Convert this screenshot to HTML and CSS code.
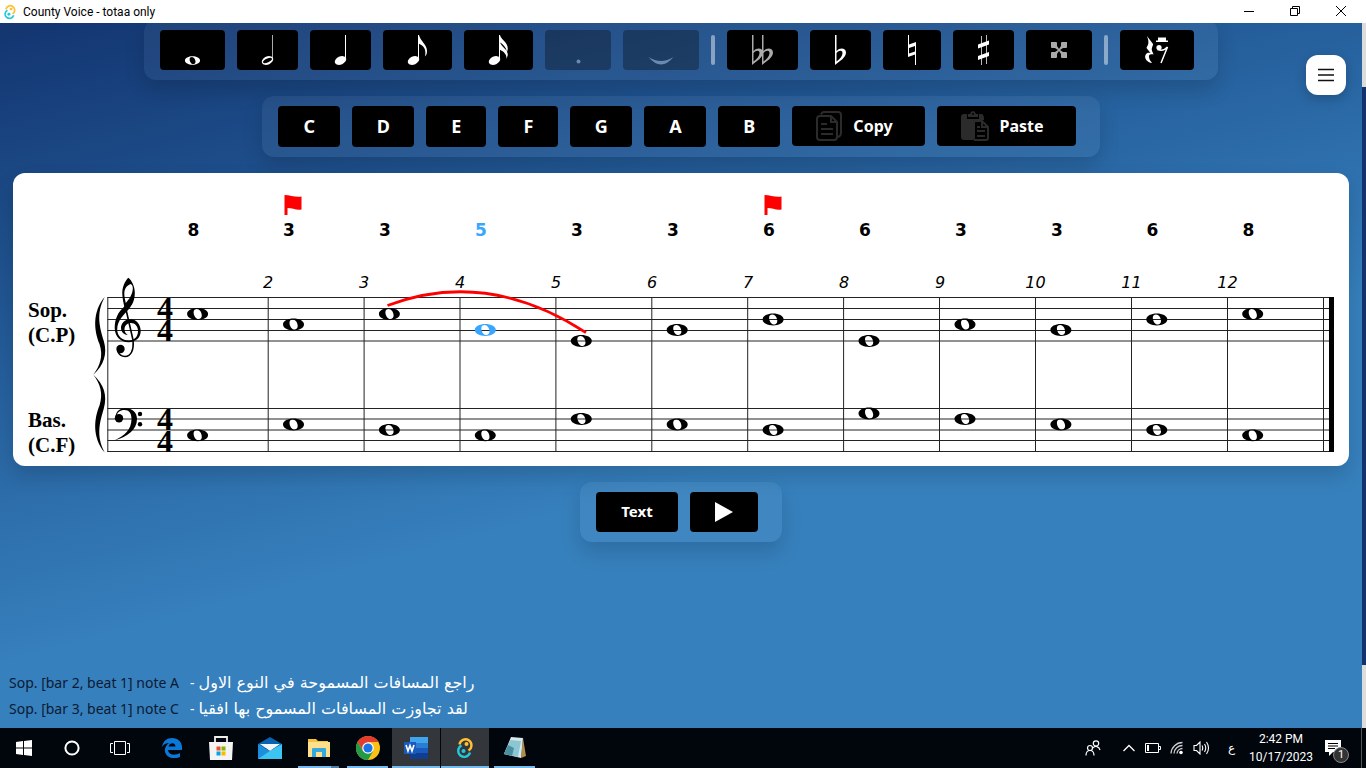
FILE: index.html
```html
<!DOCTYPE html>
<html lang="en">
<head>
<meta charset="utf-8">
<title>County Voice - totaa only</title>
<link rel="stylesheet" href="styles.css">
</head>
<body>
<svg class="defs" aria-hidden="true">
  <defs>
    <path id="whole" fill="currentColor" fill-rule="evenodd" d="M-10.500 0C-10.500-3.600-5.500-5.900 0-5.900S10.500-3.600 10.500 0 5.500 5.900 0 5.900-10.500 3.600-10.500 0ZM-4-1.800C-4-4-2.600-5-.8-5 2-5 4.200-1.800 4.200 1.600 4.200 3.800 2.800 5 1 5-1.800 5-4 1.500-4-1.800Z"/>
    <path id="flat" fill="currentColor" fill-rule="evenodd" d="M0 0H1.500V16C5 12 11 13 11 17.500 11 22.500 5 26 0 30ZM1.500 18V26.500C5 24 7.500 21 7.500 18 7.500 15 4 15 1.500 18Z"/>
    <path id="flag" fill="#f00" d="M0 0C6 .2 11 2.500 17 1.500V14.500C12 15.500 8 13 3 13V20H0Z"/>
    <path id="half-brace" d="M104.700 297C92 312 94 331 99.500 344 103.500 356 100 366 93.300 374.700 104 365 107.500 354 103.800 341 100 328 95.500 314 104.700 297Z"/>
    <g id="link-logo" fill="none" stroke-width="2.400">
      <path stroke="#ffc131" d="M5.500 7.500A6 6 0 1 1 14.500 13.500"/>
      <path stroke="#24c8db" d="M7.500 8.500A6 6 0 1 0 16 15.500"/>
      <circle cx="12.500" cy="7" r="2" fill="#ffc131"/>
      <circle cx="9.500" cy="14" r="2" fill="#24c8db"/>
    </g>
  </defs>
</svg>

<header class="titlebar">
  <svg class="titlebar-logo" viewBox="0 0 22 22" aria-hidden="true"><use href="#link-logo"/></svg>
  <span class="titlebar-text">County Voice - totaa only</span>
  <div class="window-controls">
    <button type="button" aria-label="Minimize"><svg width="12" height="12" viewBox="0 0 12 12"><path d="M1 6.500H11" stroke="#000" fill="none"/></svg></button>
    <button type="button" aria-label="Restore"><svg width="12" height="12" viewBox="0 0 12 12"><path d="M1.500 3.500h7v7h-7zM3.500 3.500v-2h7v7h-2" stroke="#000" fill="none"/></svg></button>
    <button type="button" aria-label="Close"><svg width="12" height="12" viewBox="0 0 12 12"><path d="M1 1L11 11M11 1L1 11" stroke="#000" fill="none"/></svg></button>
  </div>
</header>

<div class="app">
  <main class="workspace">
    <div class="panel panel-notes">
      <button type="button" class="tool" aria-label="Whole note"><svg width="17" height="30" viewBox="0 0 17 30"><use href="#whole" transform="translate(8.500 25.500) scale(.72)"/></svg></button>
      <button type="button" class="tool" aria-label="Half note"><svg width="13" height="30" viewBox="0 0 13 30"><path d="M11.500 0V25" stroke="#aaa"/><g transform="rotate(-25 6.500 25.500)"><path fill="#fff" fill-rule="evenodd" d="M.5 25.500a6 4 0 1 0 12 0a6 4 0 1 0-12 0M1.700 25.500a4.800 1.900 0 1 0 9.600 0a4.800 1.900 0 1 0-9.600 0"/></g></svg></button>
      <button type="button" class="tool" aria-label="Quarter note"><svg width="13" height="30" viewBox="0 0 13 30"><path d="M11.500 0V25" stroke="#fff"/><ellipse cx="6.500" cy="25.500" rx="6" ry="4" transform="rotate(-25 6.500 25.500)" fill="#fff"/></svg></button>
      <button type="button" class="tool" aria-label="Eighth note"><svg width="21" height="30" viewBox="0 0 21 30"><path d="M11.500 0V25" stroke="#fff"/><ellipse cx="6.500" cy="25.500" rx="6" ry="4" transform="rotate(-25 6.500 25.500)" fill="#fff"/><path fill="#fff" d="M11 0H12C13 6 20 9 20 16 20 18.500 19.500 20 18 21.500 19.500 14 17 11 11.500 8.500Z"/></svg></button>
      <button type="button" class="tool" aria-label="Sixteenth note"><svg width="21" height="30" viewBox="0 0 21 30"><path d="M11.500 0V25" stroke="#fff"/><ellipse cx="6.500" cy="25.500" rx="6" ry="4" transform="rotate(-25 6.500 25.500)" fill="#fff"/><path fill="#fff" d="M11 0H12C13 5 20 7 19.800 14L19 17C18 12 15 9 11.500 7ZM11 7H12C13 12 20 14 19.800 20L18.500 24C19 19 15 16 11.500 14.500Z"/></svg></button>
      <button type="button" class="tool" disabled aria-label="Dot"><svg width="18" height="30" viewBox="0 0 18 30"><circle cx="9.500" cy="26.500" r="2" fill="#fff"/></svg></button>
      <button type="button" class="tool" disabled aria-label="Tie"><svg width="28" height="30" viewBox="0 0 28 30"><path fill="#fff" d="M1.500 22Q14 30 26.500 22 14 37 1.500 22Z"/></svg></button>
      <span class="divider"></span>
      <button type="button" class="tool tool-dim" aria-label="Double flat"><svg width="23" height="30" viewBox="0 0 23 30"><use href="#flat" x="1"/><use href="#flat" x="11"/></svg></button>
      <button type="button" class="tool" aria-label="Flat"><svg width="13" height="30" viewBox="0 0 13 30"><use href="#flat" x="1"/></svg></button>
      <button type="button" class="tool" aria-label="Natural"><svg width="10" height="30" viewBox="0 0 10 30"><path fill="#fff" fill-rule="evenodd" d="M1 0H2V9.500L9 7V30H8V19.500L1 22ZM2 13V18.500L8 16.500V11Z"/></svg></button>
      <button type="button" class="tool" aria-label="Sharp"><svg width="13" height="30" viewBox="0 0 13 30"><path d="M4.500 1V30M9.500 0V29" stroke="#bbb"/><path fill="#fff" d="M1 9.500L12 5.500V9.500L1 13.500ZM1 21L12 17V21L1 25Z"/></svg></button>
      <button type="button" class="tool tool-dim" aria-label="Double sharp"><svg width="18" height="30" viewBox="0 0 18 30"><path fill="currentColor" d="M1 7H6Q7 7 7 8V11L9 14 11 11V8Q11 7 12 7H17V12Q17 13 16 13H13L10 15 13 17H16Q17 17 17 18V23H12Q11 23 11 22V19L9 16 7 19V22Q7 23 6 23H1V18Q1 17 2 17H5L8 15 5 13H2Q1 13 1 12Z"/></svg></button>
      <span class="divider"></span>
      <button type="button" class="tool" aria-label="Rest"><svg width="26" height="30" viewBox="0 0 26 30"><path fill="#fff" d="M3 1L9 9C9.500 11 6 13 9 18L9.500 19.500C6 18.500 4.500 20 5 22 5.200 25 7 26 8 28 3 27.500 0 23 1.500 20 2.500 17.500 5 17.500 6.500 18L2.500 13C3.500 10 6 9 3 1ZM14 2.500H22V5.500H24V7H12V5.500H14Z"/><circle cx="15" cy="12.500" r="2.600" fill="#fff"/><path d="M13.500 14.500C18 16 21 15 23.500 12L17 28" stroke="#fff" stroke-width="1.500" fill="none"/></svg></button>
    </div>

    <div class="panel">
      <button type="button" class="tool key">C</button>
      <button type="button" class="tool key">D</button>
      <button type="button" class="tool key key-narrow">E</button>
      <button type="button" class="tool key key-narrow">F</button>
      <button type="button" class="tool key">G</button>
      <button type="button" class="tool key">A</button>
      <button type="button" class="tool key">B</button>
      <button type="button" class="tool action"><svg width="26" height="30" viewBox="0 0 26 30" fill="none" stroke="#2b2b2b" stroke-width="2" aria-hidden="true"><path d="M5 3.500Q6 1 8 1H22Q25 1 25 4V22Q25 25 22 26"/><path d="M4 5H15L21 11V26Q21 29 18 29H4Q1 29 1 26V8Q1 5 4 5Z"/><path d="M15 5V11H21M5 13H11M5 18H17M5 23H17"/></svg>Copy</button>
      <button type="button" class="tool action"><svg width="28" height="30" viewBox="0 0 28 30" aria-hidden="true"><path fill="#2b2b2b" d="M3 3H6V8H18V3H21Q23 4 23 8V9H15Q12 9 12 12V29H3Q0 29 0 26V6Q0 3 3 3ZM8 3H9Q10 0 12 0T15 3H17V6H7V3Z"/><circle cx="12" cy="3" r="1" fill="#000"/><path fill="#000" stroke="#2b2b2b" stroke-width="2" d="M14 10H21L27 16V27Q27 29 25 29H14Q13 29 13 27V11Z"/><path fill="none" stroke="#2b2b2b" stroke-width="2" d="M21 10V16H27M16 16H19M16 20H24M16 25H24"/></svg>Paste</button>
    </div>

    <section class="score" aria-label="Score">
      <svg class="score-sheet" viewBox="13 173 1336 293">
        <g class="interval">
          <text x="193.500" y="236">8</text><text x="289" y="236">3</text><text x="385" y="236">3</text><text x="481" y="236" class="picked">5</text><text x="577" y="236">3</text><text x="673" y="236">3</text><text x="769" y="236">6</text><text x="865" y="236">6</text><text x="961" y="236">3</text><text x="1057" y="236">3</text><text x="1152.500" y="236">6</text><text x="1248.500" y="236">8</text>
        </g>
        <g class="bar-number">
          <text x="268" y="288">2</text><text x="364" y="288">3</text><text x="460" y="288">4</text><text x="556" y="288">5</text><text x="652" y="288">6</text><text x="748" y="288">7</text><text x="844" y="288">8</text><text x="940" y="288">9</text><text x="1035.500" y="288">10</text><text x="1131.500" y="288">11</text><text x="1227.500" y="288">12</text>
        </g>
        <use href="#flag" x="284.500" y="195"/><use href="#flag" x="764.500" y="195"/>

        <path class="rule" d="M107.500 297.500H1330M107.500 308.500H1330M107.500 319.500H1330M107.500 330.500H1330M107.500 341H1330M107.500 408.500H1330M107.500 419H1330M107.500 430H1330M107.500 440.500H1330M107.500 451.500H1330"/>
        <path class="rule" d="M107.800 297V452M268.200 297V452M364.100 297V452M460 297V452M555.900 297V452M651.800 297V452M747.700 297V452M843.600 297V452M939.500 297V452M1035.500 297V452M1131.500 297V452M1227.500 297V452M1323.500 297V452"/>
        <path d="M1329 297H1334V452H1329Z"/>

        <g class="part-name">
          <text x="28" y="317">Sop.</text><text x="28" y="342">(C.P)</text>
          <text x="28" y="427">Bas.</text><text x="28" y="452">(C.F)</text>
        </g>
        <use href="#half-brace"/><use href="#half-brace" transform="matrix(1 0 0 -1 0 749.400)"/>

        <path fill-rule="evenodd" d="M128.300 277.700C125 281 122 287 122.300 294 122.500 299 123.500 303 124.300 306.500 118 312 114.700 319 114.700 328 114.900 337 121 342.200 128.500 342.200 136 342.200 140.700 337.500 140.700 331 140.700 324 136 319.300 130.300 319.300 124.500 319.300 121 323.500 121 328 121 331.500 123.500 334.500 127.700 335 125 333 124.300 331 124.500 328.800 124.800 325 128 323 131 323 135 323 138 326.500 138 331 138 337 134 340.500 129 340.500 122 340.500 117.200 336 117.200 329.500 117.200 320 124 315 128.500 309.500 132.500 304.500 135 300 134.800 292 134.600 286 131.500 280 128.300 277.700ZM130.800 284C133 285.500 133.200 288 132.500 291 131.500 296.500 128 300.500 125.800 303 125 300 124.200 296 124.300 293 124.500 288 127.500 285 130.800 284Z"/>
        <path fill="none" stroke="#000" stroke-width="1.600" d="M125 305L133 340C134 350 131 356.500 125 356.500 121.500 356.500 119 354.500 117.500 351"/>
        <circle cx="120.500" cy="349" r="4.200"/>

        <path d="M115.500 418C115.500 411 120 408.300 125.500 408.300 132.500 408.300 137 412.500 137 419 137 430 127 437 114.300 440.500 125 435.500 131.500 429 131.500 419 131.500 413 129 410 124.500 410 120 410 117 412.500 116.800 416Z"/>
        <circle cx="119" cy="418.300" r="4.200"/><circle cx="140" cy="414" r="2.200"/><circle cx="140" cy="424.300" r="2.200"/>

        <g class="meter">
          <text x="165" y="319">4</text><text x="165" y="341">4</text>
          <text x="165" y="430">4</text><text x="165" y="452">4</text>
        </g>

        <g>
          <use href="#whole" x="197.600" y="314"/><use href="#whole" x="293.500" y="324.500"/><use href="#whole" x="389.400" y="314"/><use href="#whole" class="picked" x="485.300" y="330"/><use href="#whole" x="581.300" y="341"/><use href="#whole" x="677.200" y="330"/><use href="#whole" x="773.100" y="319.500"/><use href="#whole" x="869" y="341"/><use href="#whole" x="965" y="324.500"/><use href="#whole" x="1060.900" y="330"/><use href="#whole" x="1156.800" y="319.500"/><use href="#whole" x="1252.700" y="314"/>
          <use href="#whole" x="197.600" y="435.300"/><use href="#whole" x="293.500" y="424.500"/><use href="#whole" x="389.400" y="430"/><use href="#whole" x="485.300" y="435.300"/><use href="#whole" x="581.300" y="419"/><use href="#whole" x="677.200" y="424.500"/><use href="#whole" x="773.100" y="430"/><use href="#whole" x="869" y="413.500"/><use href="#whole" x="965" y="419"/><use href="#whole" x="1060.900" y="424.500"/><use href="#whole" x="1156.800" y="430"/><use href="#whole" x="1252.700" y="435.300"/>
        </g>
        <path fill="none" stroke="#f00" stroke-width="2.800" d="M387.500 305.500Q487 268 586 332.700"/>
      </svg>
    </section>

    <div class="panel">
      <button type="button" class="tool text-button">Text</button>
      <button type="button" class="tool play" aria-label="Play"><svg width="20" height="22" viewBox="0 0 20 22"><path fill="#fff" d="M1 1L19 11 1 21Z"/></svg></button>
    </div>

    <ul class="log">
      <li>Sop. [bar 2, beat 1] note A <span class="log-dash">-</span><bdi class="log-message" lang="ar">راجع المسافات المسموحة في النوع الاول</bdi></li>
      <li>Sop. [bar 3, beat 1] note C <span class="log-dash">-</span><bdi class="log-message" lang="ar">لقد تجاوزت المسافات المسموح بها افقيا</bdi></li>
    </ul>

    <button type="button" class="menu" aria-label="Menu"><svg width="16" height="14" viewBox="0 0 16 14"><path d="M0 1.500H16M0 7H16M0 12.500H16" stroke="#111" stroke-width="1.700"/></svg></button>
  </main>
  <div class="scroll-track"><div class="scroll-thumb"></div></div>
</div>

<footer class="taskbar">
  <button type="button" class="task task-system" aria-label="Start"><svg width="16" height="16" viewBox="0 0 16 16"><path fill="#fff" d="M0 2L7 1V7.500H0ZM8 1L16 0V7.500H8ZM0 8.500H7V15L0 14ZM8 8.500H16V16L8 15Z"/></svg></button>
  <button type="button" class="task task-system" aria-label="Search"><svg width="16" height="16" viewBox="0 0 16 16"><circle cx="8" cy="8" r="6.600" fill="none" stroke="#fff" stroke-width="2"/></svg></button>
  <button type="button" class="task task-system" aria-label="Task view"><svg width="20" height="16" viewBox="0 0 20 16"><path fill="none" stroke="#fff" d="M4.500 1.500H15.500V14.500H4.500ZM3 3.500H.500V12.500H3M17 3.500H19.500V12.500H17"/></svg></button>
  <div class="apps">
    <button type="button" class="task" aria-label="Edge"><svg width="20" height="20" viewBox="0 0 20 20"><path fill="#0b78d7" fill-rule="evenodd" d="M0 9C1 3 5 0 10 0 16 0 20 4 20 9V12H6C6.500 17 13 18 18 15V19C14 21 8 20.500 5 17.500 1 13 3 8 7 5 4 5 1.500 6.500 0 9ZM6.500 8.500H13.500C13.500 4 7.500 4 6.500 8.500Z"/></svg></button>
    <button type="button" class="task" aria-label="Store"><svg width="24" height="24" viewBox="0 0 24 24"><path d="M6 7V1H18V7" fill="none" stroke="#eee" stroke-width="1.800"/><path fill="#f4f4f4" d="M0 6H24L23 24H1Z"/><path fill="#f25022" d="M7.500 10.500h4v4h-4z"/><path fill="#7fba00" d="M12.500 10.500h4v4h-4z"/><path fill="#00a4ef" d="M7.500 15.500h4v4h-4z"/><path fill="#ffb900" d="M12.500 15.500h4v4h-4z"/></svg></button>
    <button type="button" class="task" aria-label="Mail"><svg width="24" height="24" viewBox="0 0 24 24"><path fill="#0a63b0" d="M0 8L12 1 24 8V12H0Z"/><path fill="#1b8fdc" d="M0 8L12 15 24 8V23H0Z"/><path fill="#3cc4f3" d="M24 8V23L12 15ZM0 23L12 15 24 23Z"/><path fill="#f2f6fa" d="M2 8H22L12 15Z"/></svg></button>
    <button type="button" class="task is-running is-stacked" aria-label="File Explorer"><svg width="22" height="20" viewBox="0 0 22 20"><path fill="#f5c33b" d="M0 1H8L10 3H20V8H0Z"/><path fill="#ffe08a" d="M0 4H22V19H0Z"/><path fill="#36a8e0" d="M4 11Q4 10 5 10H17Q18 10 18 11V19H14V14H8V19H4Z"/></svg></button>
    <button type="button" class="task is-running" aria-label="Chrome"><svg width="24" height="24" viewBox="0 0 24 24"><circle cx="12" cy="12" r="12" fill="#fbc116"/><path fill="#e33b2e" d="M1.600 6A12 12 0 0 1 22.400 6H12L7 15Z"/><path fill="#229a48" d="M1.600 6A12 12 0 0 0 12 24L17.200 15 12 17 7 15Z"/><circle cx="12" cy="12" r="5.800" fill="#fff"/><circle cx="12" cy="12" r="4.600" fill="#1a73e8"/></svg></button>
    <button type="button" class="task is-running is-active" aria-label="Word"><svg width="24" height="22" viewBox="0 0 24 22"><path fill="#41a5ee" d="M6 0H24V6H6Z"/><path fill="#2b7cd3" d="M6 6H24V11H6Z"/><path fill="#185abd" d="M6 11H24V16H6Z"/><path fill="#103f91" d="M6 16H24V22H6Z"/><path fill="#185abd" d="M0 5H12V17H0Z"/><path fill="none" stroke="#fff" stroke-width="1.600" d="M2 8L4 14 6 8.500 8 14 10 8"/></svg></button>
    <button type="button" class="task is-running is-active" aria-label="County Voice"><svg width="22" height="22" viewBox="0 0 22 22"><use href="#link-logo"/></svg></button>
    <button type="button" class="task is-running" aria-label="Notepad"><svg width="24" height="24" viewBox="0 0 24 24"><path fill="#b08d4a" d="M20 2L23 20 18 22Z"/><path fill="#d7e9ec" d="M8 1L20 2 18 22 1 18Z"/><path fill="#8cc6d2" d="M7.500 4L18 5 15 21 1 18Z"/><path fill="#4a8fa1" d="M5 9L11 12 9 20 1 18Z"/></svg></button>
  </div>

  <div class="tray">
    <button type="button" class="tray-people" aria-label="People"><svg width="16" height="16" viewBox="0 0 16 16" fill="none" stroke="#fff" stroke-width="1.200"><circle cx="5" cy="8" r="2.500"/><path d="M1 15.500C1 12 3 10.500 5 10.500S9 12 9 15.500"/><circle cx="11" cy="3.500" r="2.700"/><path d="M8 8C10 5.500 14 6 15 10"/></svg></button>
    <button type="button" aria-label="Show hidden icons"><svg width="14" height="8" viewBox="0 0 14 8"><path d="M1.500 7L7 1.500 12.500 7" fill="none" stroke="#fff" stroke-width="1.300"/></svg></button>
    <button type="button" aria-label="Battery"><svg width="16" height="10" viewBox="0 0 16 10"><path d="M.500 .500H13.500V9.500H.500ZM14 3.500H15.500V6.500H14" fill="none" stroke="#fff"/><path fill="#fff" d="M2 2H4V8H2Z"/></svg></button>
    <button type="button" aria-label="Network"><svg width="14" height="14" viewBox="0 0 14 14"><path d="M1 12.500A11.500 11.500 0 0 1 12.500 1.500M4 12.500A8.500 8.500 0 0 1 12.500 4.500M7 12.500A5.500 5.500 0 0 1 12.500 7.500" fill="none" stroke="#ccc" stroke-width="1.300"/><circle cx="11" cy="11.500" r="1.800" fill="#fff"/></svg></button>
    <button type="button" aria-label="Volume"><svg width="17" height="14" viewBox="0 0 17 14"><path d="M1 4.500H3.500L7 1V13L3.500 9.500H1ZM9 4.500Q10.500 7 9 9.500M11.500 3Q14 7 11.500 11M13.500 1Q17.500 7 13.500 13" fill="none" stroke="#fff" stroke-width="1.100"/></svg></button>
    <button type="button" class="tray-language" lang="ar">ع</button>
    <button type="button" class="clock"><span>2:42 PM</span><span>10/17/2023</span></button>
    <button type="button" class="notifications" aria-label="1 notification"><svg width="16" height="16" viewBox="0 0 16 16"><path fill="#fff" d="M0 0H16V12H8L4 16V12H0Z"/><path stroke="#000" d="M3 3.500H13M3 6H13M3 8.500H10"/></svg><span class="badge">1</span></button>
  </div>
</footer>
</body>
</html>
```

FILE: styles.css
```css
* {
  box-sizing: border-box;
}

body {
  margin: 0;
  height: 100vh;
  display: flex;
  flex-direction: column;
  overflow: hidden;
  font-family: "Noto Sans", sans-serif;
}

button {
  border: 0;
  margin: 0;
  padding: 0;
  background: none;
  color: inherit;
  font: inherit;
}

svg {
  display: block;
  flex: none;
}

.defs {
  position: absolute;
  width: 0;
  height: 0;
}

/* Window title */

.titlebar {
  display: flex;
  align-items: center;
  height: 23px;
  flex: none;
  padding: 0 2px;
  background: #fff;
  color: #000;
  font-family: Roboto, sans-serif;
  font-size: 12px;
}

.titlebar-logo {
  width: 16px;
  height: 16px;
}

.titlebar-text {
  margin-left: 5px;
  flex: 1;
}

.window-controls {
  display: flex;
  align-self: stretch;
  padding-bottom: 2px;
}

.window-controls button {
  display: grid;
  place-items: center;
  width: 46px;
}

/* Workspace */

.app {
  display: flex;
  flex: 1;
  min-height: 0;
}

.workspace {
  position: relative;
  display: flex;
  flex-direction: column;
  align-items: center;
  gap: 16px;
  flex: 1;
  min-width: 0;
  padding: 0 13px 6px;
  overflow: hidden;
  background: linear-gradient(165deg, #133570 0%, #235b98 30%, #3680bd 60%);
}

.scroll-track {
  width: 4px;
  padding: 64px 0 63px;
  background: #dcdcdc;
}

.scroll-thumb {
  height: 100%;
  background: #12336c;
}

.panel {
  display: flex;
  align-items: flex-start;
  gap: 12px;
  padding: 10px 24px 10px 16px;
  border-radius: 12px;
  background: rgba(255, 255, 255, 0.05);
  box-shadow: 0 10px 20px rgba(0, 0, 0, 0.15);
}

.panel-notes {
  margin-top: -3px;
}

.tool {
  display: flex;
  align-items: center;
  justify-content: center;
  height: 40px;
  padding: 0 24px;
  border-radius: 4px;
  background: #000;
  color: #fff;
  font-weight: 700;
}

.tool:disabled {
  opacity: 0.3;
}

.tool-dim {
  color: #aaa;
}

.divider {
  align-self: center;
  width: 4px;
  height: 30px;
  border-radius: 2px;
  background: rgba(255, 255, 255, 0.45);
}

.key {
  width: 62px;
  height: 41px;
  padding: 0 0 2px;
  font-size: 18px;
}

.key-narrow {
  width: 60px;
}

.action {
  gap: 11px;
  padding: 0 32px 0 24px;
  font-size: 16px;
}

.text-button {
  padding: 0 25px 2px;
  font-size: 15px;
}

.menu {
  position: absolute;
  top: 32px;
  right: 16px;
  display: grid;
  place-items: center;
  width: 40px;
  height: 40px;
  border-radius: 12px;
  background: #fff;
  box-shadow: 0 4px 12px rgba(0, 0, 0, 0.2);
}

/* Score */

.score {
  width: 100%;
  border-radius: 12px;
  background: #fff;
  box-shadow: 0 10px 20px rgba(0, 0, 0, 0.15);
}

.score-sheet {
  width: 100%;
  height: auto;
  color: #000;
}

.rule {
  fill: none;
  stroke: #222;
  stroke-width: 1px;
}

.interval,
.bar-number {
  font-family: "DejaVu Sans", sans-serif;
  font-size: 16px;
  text-anchor: middle;
}

.interval {
  font-size: 17px;
  font-weight: 700;
}

.bar-number {
  font-style: italic;
}

.picked {
  color: #38a5ff;
  fill: #38a5ff;
}

.part-name,
.meter {
  font-family: "Liberation Serif", serif;
  font-weight: 700;
}

.part-name {
  font-size: 21px;
}

.meter {
  font-size: 32px;
  text-anchor: middle;
}

/* Messages */

.log {
  align-self: stretch;
  margin: auto 0 0 -4px;
  padding: 0;
  list-style: none;
  color: #0b1a33;
  font-size: 14px;
  line-height: 26px;
}

.log li {
  display: flex;
  height: 26px;
}

.log-dash {
  margin: 0 4px 0 11px;
  color: #fff;
}

.log-message {
  color: #fff;
  font-family: "DejaVu Sans", sans-serif;
  font-size: 16px;
}

/* Taskbar */

.taskbar {
  display: flex;
  height: 40px;
  flex: none;
  background: #01050c;
  color: #fff;
}

.task {
  position: relative;
  display: grid;
  place-items: center;
  width: 49px;
}

.task-system {
  width: 48px;
}

.apps {
  display: flex;
  margin-left: 3px;
}

.is-running::after {
  content: "";
  position: absolute;
  right: 4px;
  bottom: 0;
  left: 4px;
  height: 2px;
  background: #76b9ed;
}

.is-stacked::after {
  background: linear-gradient(90deg, #76b9ed 80%, #527f9f 80%);
}

.is-active {
  background: #33373b;
  border-right: 1px solid #01050c;
}

.is-active::after {
  right: 0;
  left: 0;
}

.tray {
  display: flex;
  align-items: center;
  margin-left: auto;
  margin-right: 4px;
  border-right: 1px solid #555;
  font-family: Roboto, sans-serif;
  font-size: 12px;
}

.tray button {
  display: grid;
  place-items: center;
  width: 24px;
  height: 40px;
}

.tray .tray-people {
  width: 48px;
}

.tray .tray-language {
  width: 36px;
}

.tray .clock {
  align-content: center;
  width: 64px;
  line-height: 18px;
}

.tray .notifications {
  position: relative;
  width: 40px;
  margin-right: 8px;
}

.badge {
  position: absolute;
  top: 19px;
  left: 20px;
  width: 16px;
  height: 16px;
  border: 1px solid #888;
  border-radius: 50%;
  background: #333;
  font-size: 11px;
  line-height: 14px;
  text-align: center;
}
```
